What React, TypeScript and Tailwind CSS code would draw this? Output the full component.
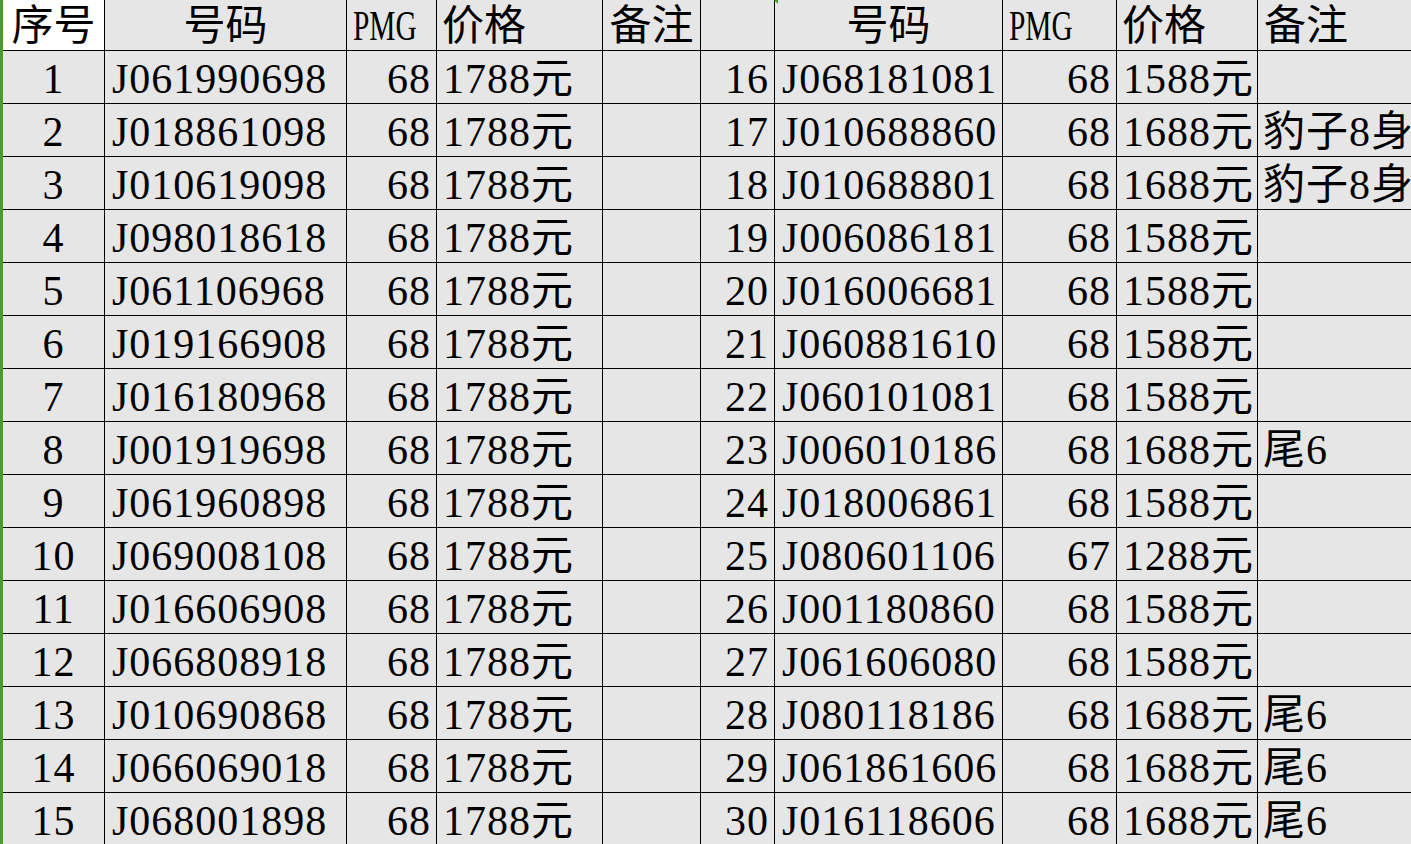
import React from "react";

type Row = { no: number; code: string; pmg: number; price: string; note?: string };

const left: Row[] = [
  { no: 1, code: "J061990698", pmg: 68, price: "1788元" },
  { no: 2, code: "J018861098", pmg: 68, price: "1788元" },
  { no: 3, code: "J010619098", pmg: 68, price: "1788元" },
  { no: 4, code: "J098018618", pmg: 68, price: "1788元" },
  { no: 5, code: "J061106968", pmg: 68, price: "1788元" },
  { no: 6, code: "J019166908", pmg: 68, price: "1788元" },
  { no: 7, code: "J016180968", pmg: 68, price: "1788元" },
  { no: 8, code: "J001919698", pmg: 68, price: "1788元" },
  { no: 9, code: "J061960898", pmg: 68, price: "1788元" },
  { no: 10, code: "J069008108", pmg: 68, price: "1788元" },
  { no: 11, code: "J016606908", pmg: 68, price: "1788元" },
  { no: 12, code: "J066808918", pmg: 68, price: "1788元" },
  { no: 13, code: "J010690868", pmg: 68, price: "1788元" },
  { no: 14, code: "J066069018", pmg: 68, price: "1788元" },
  { no: 15, code: "J068001898", pmg: 68, price: "1788元" },
];

const right: Row[] = [
  { no: 16, code: "J068181081", pmg: 68, price: "1588元" },
  { no: 17, code: "J010688860", pmg: 68, price: "1688元", note: "豹子8身份" },
  { no: 18, code: "J010688801", pmg: 68, price: "1688元", note: "豹子8身份" },
  { no: 19, code: "J006086181", pmg: 68, price: "1588元" },
  { no: 20, code: "J016006681", pmg: 68, price: "1588元" },
  { no: 21, code: "J060881610", pmg: 68, price: "1588元" },
  { no: 22, code: "J060101081", pmg: 68, price: "1588元" },
  { no: 23, code: "J006010186", pmg: 68, price: "1688元", note: "尾6" },
  { no: 24, code: "J018006861", pmg: 68, price: "1588元" },
  { no: 25, code: "J080601106", pmg: 67, price: "1288元" },
  { no: 26, code: "J001180860", pmg: 68, price: "1588元" },
  { no: 27, code: "J061606080", pmg: 68, price: "1588元" },
  { no: 28, code: "J080118186", pmg: 68, price: "1688元", note: "尾6" },
  { no: 29, code: "J061861606", pmg: 68, price: "1688元", note: "尾6" },
  { no: 30, code: "J016118606", pmg: 68, price: "1688元", note: "尾6" },
];

// 单元格：整行高度，黑色网格线在右边
const Cell = ({ className = "", children }: { className?: string; children?: React.ReactNode }) => (
  <div className={`h-full shrink-0 overflow-hidden whitespace-nowrap border-r border-black ${className}`}>
    {children}
  </div>
);

const Narrow = ({ children }: { children: React.ReactNode }) => (
  <span className="inline-block origin-left scale-x-[0.7] tracking-normal">{children}</span>
);

const HeaderRow = () => (
  <div className="flex h-[52px] border-b border-black leading-[47px] [&>div]:pt-[3px]">
    <Cell className="w-[102px] bg-white text-center">序号</Cell>
    <Cell className="w-[242px] text-center">号码</Cell>
    <Cell className="w-[90px] pl-[6px]">
      <Narrow>PMG</Narrow>
    </Cell>
    <Cell className="w-[166px] pl-[5px]">价格</Cell>
    <Cell className="w-[98px] text-center">备注</Cell>
    <Cell className="w-[74px]" />
    <Cell className="w-[228px] text-center">号码</Cell>
    <Cell className="w-[114px] pl-[6px]">
      <Narrow>PMG</Narrow>
    </Cell>
    <Cell className="w-[141px] pl-[5px]">价格</Cell>
    <div className="h-full flex-1 overflow-hidden whitespace-nowrap pl-[6px]">备注</div>
  </div>
);

const DataRow = ({ a, b }: { a: Row; b: Row }) => (
  <div className="flex h-[53px] border-b border-black leading-[47px] tracking-[1px] [&>div]:pt-[5px]">
    <Cell className="w-[102px] text-center">{a.no}</Cell>
    <Cell className="w-[242px] pl-[7px]">{a.code}</Cell>
    <Cell className="w-[90px] pr-[5px] text-right">{a.pmg}</Cell>
    <Cell className="w-[166px] pl-[6px]">{a.price}</Cell>
    <Cell className="w-[98px]">{a.note}</Cell>
    <Cell className="w-[74px] pr-[5px] text-right">{b.no}</Cell>
    <Cell className="w-[228px] pl-[7px]">{b.code}</Cell>
    <Cell className="w-[114px] pr-[5px] text-right">{b.pmg}</Cell>
    <Cell className="w-[141px] pl-[6px]">{b.price}</Cell>
    <div className="h-full flex-1 overflow-hidden whitespace-nowrap pl-[5px]">{b.note}</div>
  </div>
);

export default function App() {
  return (
    <div className="relative flex h-[844px] w-[1411px] overflow-hidden bg-[#e6e6e6] font-['Liberation_Serif','Noto_Sans_CJK_SC',serif] text-[42px] text-black">
      <div className="w-[3px] shrink-0 bg-[#4c9a2a]" />
      <div className="flex flex-1 flex-col">
        <HeaderRow />
        {left.map((row, i) => (
          <DataRow key={row.no} a={row} b={right[i]} />
        ))}
      </div>
      {/* 选区角上的绿色小标记 */}
      <div className="absolute left-[774px] top-0 h-0 w-0 border-l-[4px] border-t-[4px] border-l-transparent border-t-[#4c9a2a]" />
    </div>
  );
}
